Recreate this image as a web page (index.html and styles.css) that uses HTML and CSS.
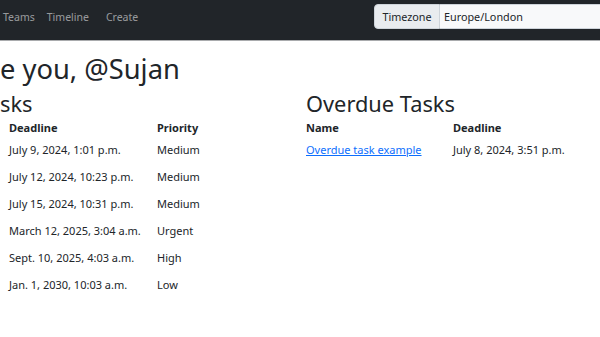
FILE: index.html
```html
<!DOCTYPE html>
<html lang="en">
<head>
<meta charset="utf-8">
<title>Tasks</title>
<link rel="stylesheet" href="styles.css">
</head>
<body>
<nav class="navbar">
  <ul class="nav-links">
    <li><a class="nav-link" href="#">Teams</a></li>
    <li><a class="nav-link" href="#">Timeline</a></li>
    <li class="nav-create"><a class="nav-link" href="#">Create</a></li>
  </ul>
  <div class="tz-cell">
    <div class="input-group">
      <span class="input-label">Timezone</span>
      <span class="input-field">Europe/London</span>
    </div>
  </div>
</nav>
<main class="page">
  <h1 class="greeting">e you, @Sujan</h1>
  <div class="columns">
    <section class="col col-left">
      <h2 class="col-title">sks</h2>
      <table class="tasks tasks-left">
        <thead>
          <tr><th>Deadline</th><th>Priority</th></tr>
        </thead>
        <tbody>
          <tr><td>July 9, 2024, 1:01 p.m.</td><td>Medium</td></tr>
          <tr><td>July 12, 2024, 10:23 p.m.</td><td>Medium</td></tr>
          <tr><td>July 15, 2024, 10:31 p.m.</td><td>Medium</td></tr>
          <tr><td>March 12, 2025, 3:04 a.m.</td><td>Urgent</td></tr>
          <tr><td>Sept. 10, 2025, 4:03 a.m.</td><td>High</td></tr>
          <tr><td>Jan. 1, 2030, 10:03 a.m.</td><td>Low</td></tr>
        </tbody>
      </table>
    </section>
    <section class="col col-right">
      <h2 class="col-title">Overdue Tasks</h2>
      <table class="tasks">
        <thead>
          <tr><th>Name</th><th>Deadline</th></tr>
        </thead>
        <tbody>
          <tr><td><a class="task-link" href="#">Overdue task example</a></td><td>July 8, 2024, 3:51 p.m.</td></tr>
        </tbody>
      </table>
    </section>
  </div>
</main>
</body>
</html>
```
FILE: styles.css
```css
* { box-sizing: border-box; }
html, body { margin: 0; padding: 0; }
body {
  font-family: "Noto Sans", "DejaVu Sans", sans-serif;
  color: #212529;
  background: #fff;
  font-size: 12px;
  width: 600px;
  overflow: hidden;
}
.navbar {
  height: 41px;
  background: #212529;
  border-bottom: 1px solid #a9abad;
  display: grid;
  grid-template-columns: 374px 1fr;
  align-items: start;
  overflow: hidden;
}
.nav-links {
  list-style: none;
  margin: 0;
  padding: 0 0 0 3px;
  display: flex;
  gap: 12px;
  height: 33px;
  align-items: center;
}
.nav-create { margin-left: 5px; }
.nav-link {
  color: rgba(255, 255, 255, 0.55);
  text-decoration: none;
  font-size: 10.5px;
}
.tz-cell { padding-top: 4px; }
.input-group {
  display: flex;
  width: 260px;
  height: 25px;
}
.input-label {
  flex: none;
  width: 66px;
  background: #e9ecef;
  border: 1px solid #ced4da;
  border-radius: 4px 0 0 4px;
  display: flex;
  align-items: center;
  justify-content: center;
  font-size: 10.8px;
  color: #212529;
}
.input-field {
  flex: 1;
  background: #f8f9fa;
  border: 1px solid #ced4da;
  border-left: none;
  display: flex;
  align-items: center;
  padding-left: 4px;
  font-size: 10.8px;
  color: #212529;
}
.page { padding: 12px 0 0 0; }
.greeting {
  margin: 0;
  font-size: 27.3px;
  font-weight: 400;
  line-height: 1.2;
}
.columns {
  display: grid;
  grid-template-columns: 306px 1fr;
}
.col-title {
  margin: 5px 0 2px;
  font-size: 21.8px;
  font-weight: 400;
  line-height: 1.2;
}
.tasks {
  border-collapse: collapse;
  font-size: 11px;
}
.tasks-left { margin-left: 9px; }
.tasks th, .tasks td {
  text-align: left;
  padding: 0;
  width: 148px;
  line-height: 18px;
}
.tasks th { font-weight: 700; }
.tasks td { padding: 4.5px 0; }
.task-link { color: #0d6efd; text-decoration: underline; }
```
